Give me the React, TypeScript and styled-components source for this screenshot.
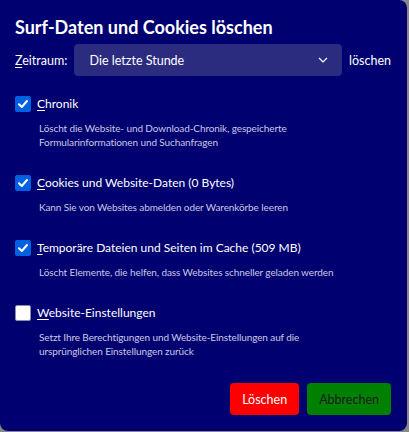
import React from 'react';
import styled, { createGlobalStyle } from 'styled-components';

const GlobalStyle = createGlobalStyle`
  html, body {
    margin: 0;
    padding: 0;
    background: #888888;
  }
  body {
    width: 409px;
    height: 432px;
    overflow: hidden;
  }
`;

const Dialog = styled.div`
  box-sizing: border-box;
  width: 407px;
  height: 431px;
  background-color: #000070;
  border-radius: 0 8px 8px 8px;
  color: #ffffff;
  font-family: Lato, 'Noto Sans', sans-serif;
  padding: 16px 16px 0 15px;
  display: flex;
  flex-direction: column;
`;

const Title = styled.h1`
  margin: 0;
  font-size: 18px;
  font-weight: 700;
  line-height: 22px;
`;

const RangeRow = styled.div`
  display: flex;
  align-items: center;
  margin-top: 6px;
  font-size: 12.5px;
`;

const RangeLabel = styled.span`
  width: 59px;
`;

const Select = styled.div`
  box-sizing: border-box;
  width: 270px;
  height: 32px;
  border-radius: 4px;
  background-color: #2b2b80;
  display: flex;
  align-items: center;
  justify-content: space-between;
  padding: 0 14px 0 16px;
`;

const AfterSelect = styled.span`
  margin-left: 7px;
`;

const Options = styled.div`
  display: flex;
  flex-direction: column;
  margin-top: 19px;
  gap: 25px;
`;

const Option = styled.div`
  display: flex;
  flex-direction: column;
`;

const OptionHead = styled.label`
  display: flex;
  align-items: center;
  gap: 6px;
  font-size: 12px;
  line-height: 18px;
`;

const Box = styled.span<{ $checked: boolean }>`
  box-sizing: border-box;
  width: 16px;
  height: 16px;
  border-radius: 2px;
  display: flex;
  align-items: center;
  justify-content: center;
  background-color: ${(p) => (p.$checked ? '#0061e0' : '#ffffff')};
  border: 1px solid ${(p) => (p.$checked ? '#0061e0' : '#8f8f9d')};
`;

const Key = styled.span`
  text-decoration: underline;
  text-underline-offset: 2px;
`;

const Description = styled.p`
  margin: 8px 0 0 24px;
  font-size: 10px;
  line-height: 14px;
  letter-spacing: -0.1px;
  color: #c9c9e6;
`;

const Footer = styled.div`
  display: flex;
  justify-content: flex-end;
  gap: 8px;
  margin-top: auto;
  margin-bottom: 16px;
`;

const Button = styled.button<{ $tone: 'danger' | 'cancel' }>`
  height: 32px;
  border: none;
  border-radius: 4px;
  padding: 0 12px;
  font-family: inherit;
  font-size: 12.5px;
  background-color: ${(p) => (p.$tone === 'danger' ? '#ff0000' : '#008000')};
  color: ${(p) => (p.$tone === 'danger' ? '#ffffff' : '#1c1b22')};
`;

const Check = () => (
  <svg width="12" height="12" viewBox="0 0 12 12">
    <path d="M2 6.3 L4.8 9 L10 3" fill="none" stroke="#fff" strokeWidth="2" strokeLinecap="round" strokeLinejoin="round" />
  </svg>
);

const Chevron = () => (
  <svg width="10" height="6" viewBox="0 0 10 6">
    <path d="M1 1 L5 5 L9 1" fill="none" stroke="#fff" strokeWidth="1.2" />
  </svg>
);

const items = [
  {
    key: 'C',
    rest: 'hronik',
    checked: true,
    desc: ['Löscht die Website- und Download-Chronik, gespeicherte', 'Formularinformationen und Suchanfragen'],
  },
  {
    key: 'C',
    rest: 'ookies und Website-Daten (0 Bytes)',
    checked: true,
    desc: ['Kann Sie von Websites abmelden oder Warenkörbe leeren'],
  },
  {
    key: 'T',
    rest: 'emporäre Dateien und Seiten im Cache (509 MB)',
    checked: true,
    desc: ['Löscht Elemente, die helfen, dass Websites schneller geladen werden'],
  },
  {
    key: 'W',
    rest: 'ebsite-Einstellungen',
    checked: false,
    desc: ['Setzt Ihre Berechtigungen und Website-Einstellungen auf die', 'ursprünglichen Einstellungen zurück'],
  },
];

export default function App() {
  return (
    <>
      <GlobalStyle />
      <Dialog>
        <Title>Surf-Daten und Cookies löschen</Title>
        <RangeRow>
          <RangeLabel>
            <Key>Z</Key>eitraum:
          </RangeLabel>
          <Select>
            <span>Die letzte Stunde</span>
            <Chevron />
          </Select>
          <AfterSelect>löschen</AfterSelect>
        </RangeRow>
        <Options>
          {items.map((it, i) => (
            <Option key={i}>
              <OptionHead>
                <Box $checked={it.checked}>{it.checked && <Check />}</Box>
                <span>
                  <Key>{it.key}</Key>
                  {it.rest}
                </span>
              </OptionHead>
              <Description>
                {it.desc.map((d, j) => (
                  <React.Fragment key={j}>
                    {j > 0 && <br />}
                    {d}
                  </React.Fragment>
                ))}
              </Description>
            </Option>
          ))}
        </Options>
        <Footer>
          <Button $tone="danger">Löschen</Button>
          <Button $tone="cancel">Abbrechen</Button>
        </Footer>
      </Dialog>
    </>
  );
}
